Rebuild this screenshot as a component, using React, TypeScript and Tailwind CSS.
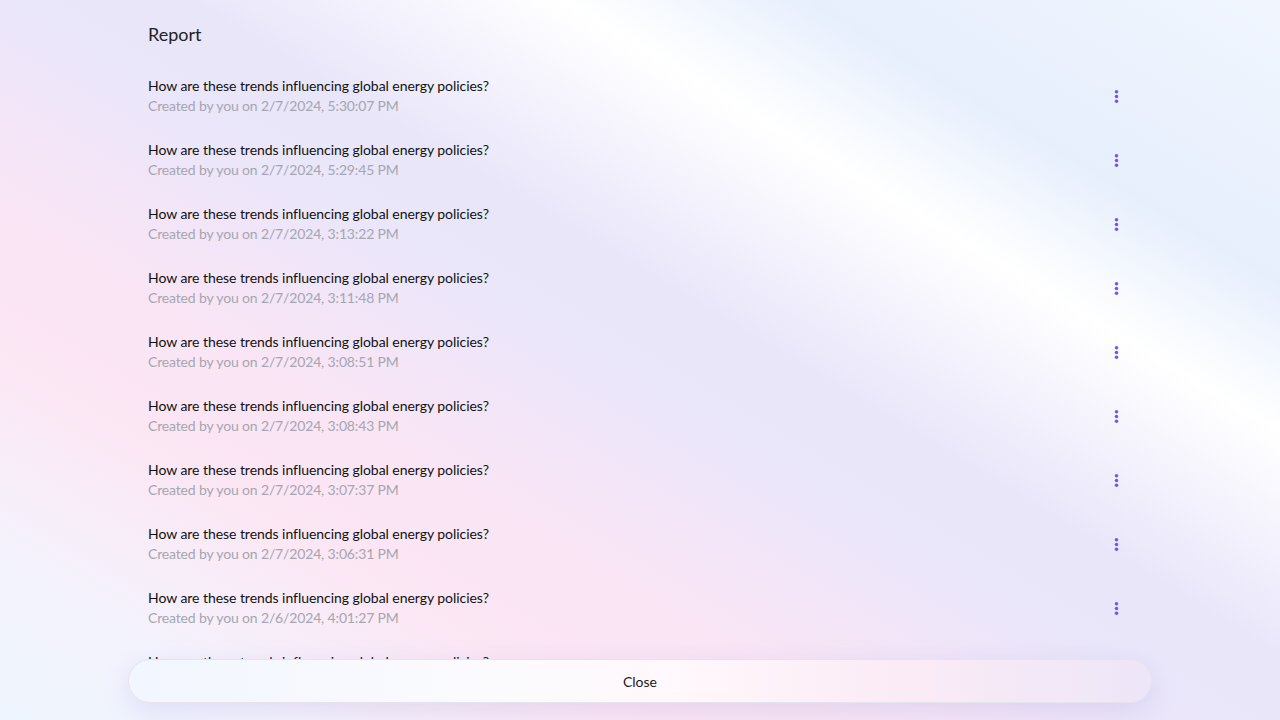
import React from "react";

const rows = [
  "2/7/2024, 5:30:07 PM",
  "2/7/2024, 5:29:45 PM",
  "2/7/2024, 3:13:22 PM",
  "2/7/2024, 3:11:48 PM",
  "2/7/2024, 3:08:51 PM",
  "2/7/2024, 3:08:43 PM",
  "2/7/2024, 3:07:37 PM",
  "2/7/2024, 3:06:31 PM",
  "2/6/2024, 4:01:27 PM",
  "2/6/2024, 3:58:12 PM",
];

function MoreVert() {
  return (
    <svg width="19" height="19" viewBox="0 0 24 24" fill="#7552f7">
      <circle cx="12" cy="6" r="2.2" />
      <circle cx="12" cy="12" r="2.2" />
      <circle cx="12" cy="18" r="2.2" />
    </svg>
  );
}

export default function App() {
  return (
    <div className="h-[720px] w-full overflow-hidden bg-[linear-gradient(31deg,#eef5fd_0%,#f4f3fd_11%,#fce6f4_25%,#f9e5f5_35%,#ebe6fa_48%,#e9e6fa_56%,#ffffff_71%,#e7effd_81%,#f1f6fe_100%)] font-['Lato',sans-serif]">
      <div className="mx-auto flex h-full w-[1024px] flex-col">
        <div className="px-5 pt-[22px] pb-[18px] text-[18px] leading-6 text-[#222]">Report</div>
        <div className="flex-1 overflow-hidden">
          {rows.map((d, i) => (
            <div key={i} className="flex items-center justify-between px-5 py-3">
              <div className="flex flex-col">
                <div className="text-[14px] leading-5 tracking-[-0.05px] text-[#111]">
                  How are these trends influencing global energy policies?
                </div>
                <div className="text-[14px] leading-5 tracking-[-0.15px] text-[#a6a5b0]">Created by you on {d}</div>
              </div>
              <button className="flex h-8 w-8 items-center justify-center rounded-full">
                <MoreVert />
              </button>
            </div>
          ))}
        </div>
        <div className="pb-[17px]">
          <button className="flex h-[44px] w-full items-center justify-center rounded-full border border-[#e6e3ef] bg-[linear-gradient(90deg,#f2f6fe_0%,#fbfbfe_35%,#fff7fb_55%,#fbebf6_75%,#ede6f8_100%)] text-[14px] text-[#1a1a1a] shadow-[0_8px_28px_rgba(130,120,210,0.18)]">
            Close
          </button>
        </div>
      </div>
    </div>
  );
}
